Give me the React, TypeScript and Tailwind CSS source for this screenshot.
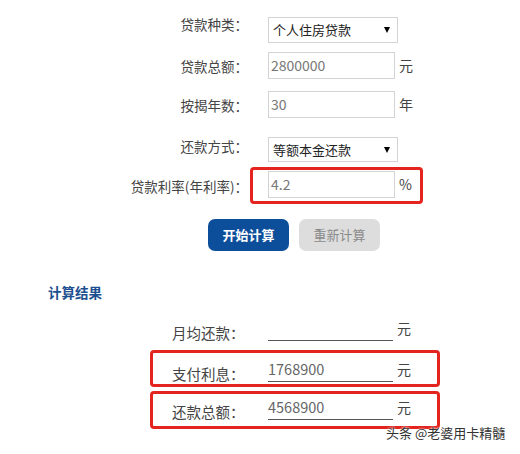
const font = { fontFamily: '"Noto Sans CJK SC", "Noto Sans", sans-serif' };

function Label({ text, cls = '' }: { text: string; cls?: string }) {
  return (
    <div className={`w-[248px] shrink-0 text-right text-[13.5px] leading-[20px] text-[#444] ${cls}`}>{text}</div>
  );
}

function SelectBox({ value }: { value: string }) {
  return (
    <div className="ml-[20px] flex h-full w-[130px] items-center justify-between border border-[#d4d4d4] bg-white pl-[4px] pr-[7px] text-[13px] text-[#222]">
      <span>{value}</span>
      {/* dropdown caret */}
      <span className="h-0 w-0 border-x-[3.5px] border-t-[6px] border-x-transparent border-t-black" />
    </div>
  );
}

function InputBox({ value, unit }: { value: string; unit: string }) {
  return (
    <>
      <div className="flex h-full w-[127px] items-center border border-[#d4d4d4] bg-white pl-[2px] text-[14px] text-[#777]">
        {value}
      </div>
      <span className="ml-[4px] text-[14px] text-[#444]">{unit}</span>
    </>
  );
}

function ResultRow({
  label,
  value,
  boxed,
  cls,
  labelTop,
  valueTop,
}: {
  label: string;
  value: string;
  boxed: boolean;
  cls: string;
  labelTop: string;
  valueTop: string;
}) {
  return (
    <div className="flex pl-[150px]">
      <div
        className={`flex w-[290px] rounded-[4px] border-[3px] pl-[19px] ${boxed ? 'border-[#e3241f]' : 'border-transparent'} ${cls}`}
      >
        <div className={`w-[96px] shrink-0 text-[14.5px] leading-[20px] text-[#444] ${labelTop}`}>{label}</div>
        <div
          className={`h-[23px] w-[125px] border-b border-[#555] text-[14.5px] leading-[20px] text-[#666] ${valueTop}`}
        >
          {value}
        </div>
        <div className={`ml-[4px] text-[14px] leading-[20px] text-[#444] ${valueTop}`}>元</div>
      </div>
    </div>
  );
}

export default function App() {
  return (
    <div className="relative h-[454px] w-[520px] overflow-hidden bg-white" style={font}>
      {/* Form */}
      <div className="mt-[17px] flex h-[26px] items-center">
        <Label text="贷款种类：" cls="mb-[12px]" />
        <SelectBox value="个人住房贷款" />
      </div>
      <div className="mt-[9px] flex h-[27px] items-center">
        <Label text="贷款总额：" />
        <div className="ml-[20px] flex h-full items-center">
          <InputBox value="2800000" unit="元" />
        </div>
      </div>
      <div className="mt-[12px] flex h-[27px] items-center">
        <Label text="按揭年数：" />
        <div className="ml-[20px] flex h-full items-center">
          <InputBox value="30" unit="年" />
        </div>
      </div>
      <div className="mt-[19px] flex h-[25px] items-center">
        <Label text="还款方式：" cls="mb-[7px]" />
        <SelectBox value="等额本金还款" />
      </div>
      <div className="mt-[5px] flex h-[37px] items-center">
        <Label text="贷款利率(年利率)：" />
        <div className="ml-[2px] flex h-full w-[173px] items-start rounded-[4px] border-[3px] border-[#e3241f] pl-[15px] pt-[1px]">
          <div className="flex h-[27px] items-center">
            <InputBox value="4.2" unit="%" />
          </div>
        </div>
      </div>

      {/* Buttons */}
      <div className="mt-[15px] flex gap-[10px] pl-[208px]">
        <button className="h-[32px] w-[81px] rounded-[7px] bg-[#0d4e9b] text-[13px] font-bold text-white">开始计算</button>
        <button className="h-[32px] w-[81px] rounded-[7px] bg-[#dddddd] text-[13px] text-[#8a8a8a]">重新计算</button>
      </div>

      {/* Results */}
      <div className="mt-[31px] pl-[48px] text-[13.5px] font-bold leading-[20px] text-[#1b4f8f]">计算结果</div>
      <div className="mt-[7px] flex flex-col gap-[4px]">
        <ResultRow label="月均还款：" value="" boxed={false} cls="h-[37px]" labelTop="mt-[11px]" valueTop="mt-[6px]" />
        <ResultRow label="支付利息：" value="1768900" boxed cls="h-[37px]" labelTop="mt-[11px]" valueTop="mt-[6px]" />
        <ResultRow label="还款总额：" value="4568900" boxed cls="h-[38px]" labelTop="mt-[8px]" valueTop="mt-[3px]" />
      </div>

      {/* Watermark */}
      <div
        className="absolute left-[386px] top-[423px] whitespace-nowrap text-[13px] leading-[20px] text-[#333]"
        style={{ textShadow: '0 0 2px #fff, 0 0 2px #fff' }}
      >
        头条 @老婆用卡精髓
      </div>
    </div>
  );
}
